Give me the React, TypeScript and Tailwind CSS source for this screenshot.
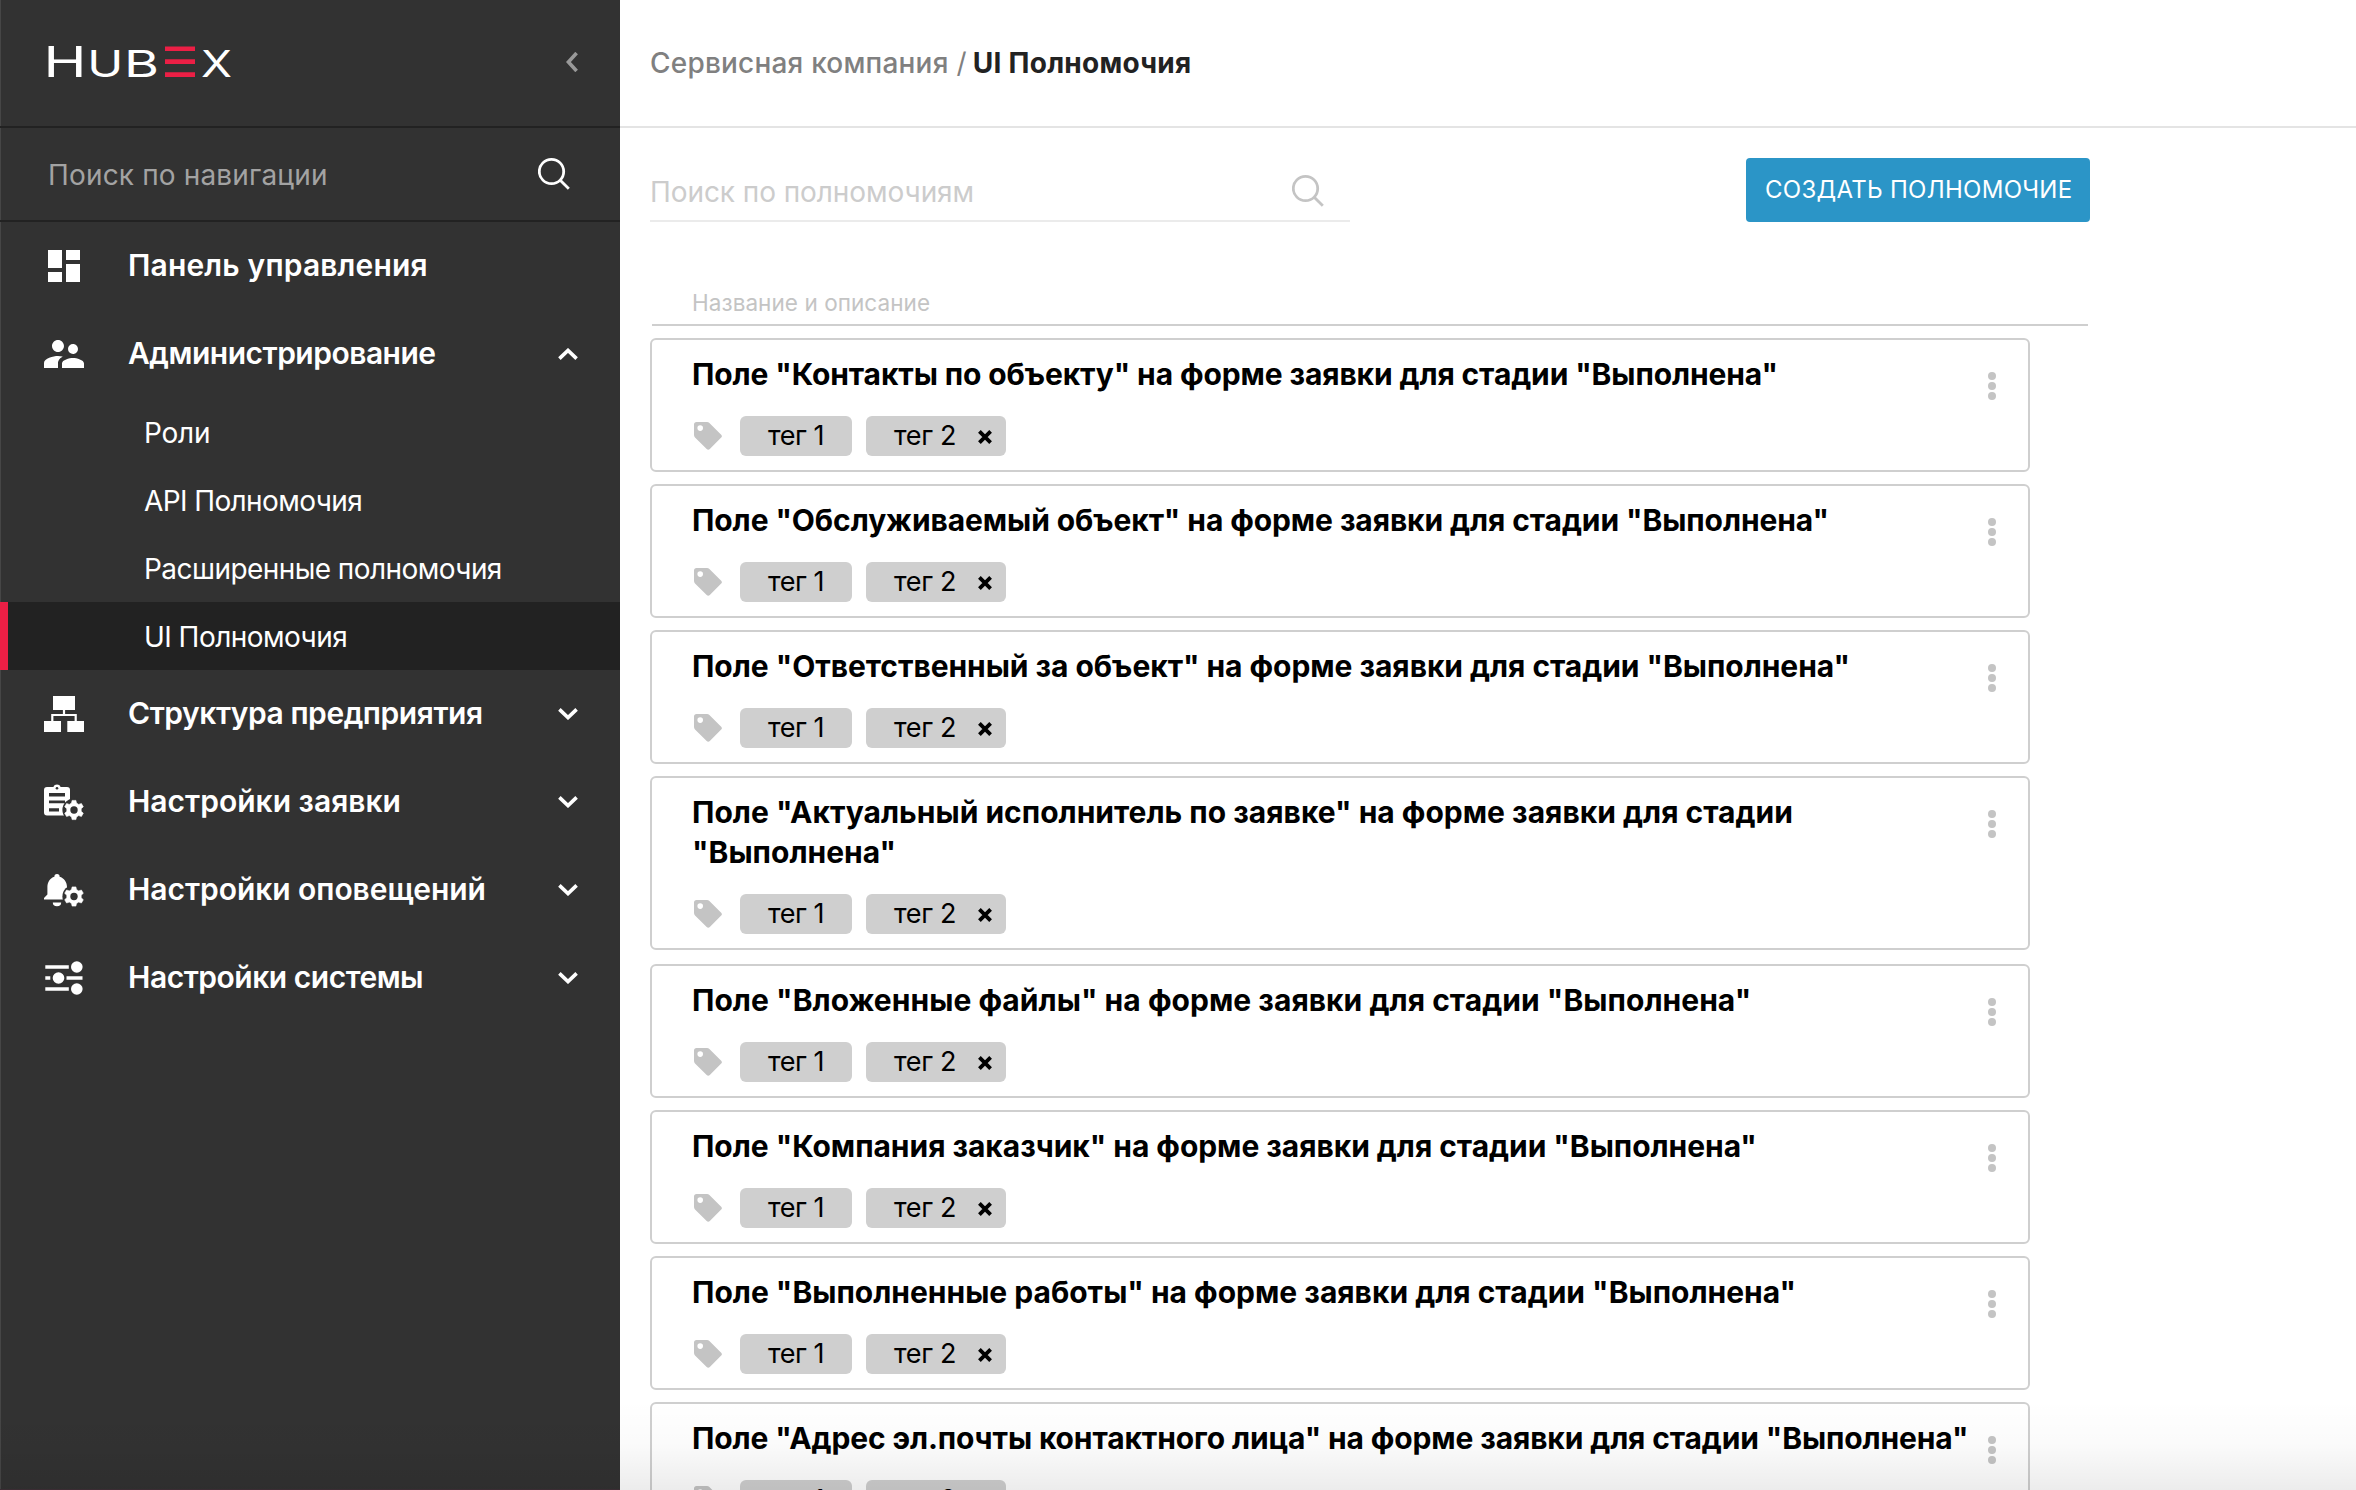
import type { ReactNode } from "react";
import { MdSupervisorAccount } from "react-icons/md";

type SubItem = { label: string; tracking: string; active?: boolean };
type NavItem = {
  label: string;
  tracking: string;
  icon: ReactNode;
  expandable: boolean;
  children?: SubItem[];
};

const GEAR =
  "M-1.9 -9.6h3.8l.6 2.7 2.2 1.3 2.7-.9 1.9 3.3-2.1 1.9v2.6l2.1 1.9-1.9 3.3-2.7-.9-2.2 1.3-.6 2.7h-3.8l-.6-2.7-2.2-1.3-2.7.9-1.9-3.3 2.1-1.9v-2.6l-2.1-1.9 1.9-3.3 2.7.9 2.2-1.3z";

function Gear({ x, y }: { x: number; y: number }) {
  return (
    <g transform={`translate(${x} ${y})`}>
      <circle r="11.6" fill="#323232" />
      <path d={GEAR} fill="#fff" stroke="#fff" strokeWidth="0.6" strokeLinejoin="round" />
      <circle r="3.7" fill="#323232" />
    </g>
  );
}

const DashboardIcon = () => (
  <svg width="40" height="40" viewBox="0 0 40 40" fill="#fff">
    <path d="M4 4h14v18H4zM4 26h14v10H4zM22 4h14v10H22zM22 18h14v18H22z" />
  </svg>
);

const StructureIcon = () => (
  <svg width="40" height="40" viewBox="0 0 40 40" fill="#fff">
    <path d="M9 2h22v14H9zM0 27h17v11H0zM23.3 27H40v11H23.3z" />
    <path d="M20 16v5M8.3 28v-7h23.4v7" fill="none" stroke="#fff" strokeWidth="2.2" />
  </svg>
);

const ClipboardGearIcon = () => (
  <svg width="40" height="40" viewBox="0 0 40 40" fill="#fff">
    <path d="M3 5h6.3a4 4 0 0 1 7.4 0H23a3 3 0 0 1 3 3v25.6H3a3 3 0 0 1-3-3V8a3 3 0 0 1 3-3z" />
    <circle cx="13" cy="6.2" r="1.3" fill="#323232" />
    <path d="M5 11h16v3.6H5zM5 18.4h16v2.8H5zM5 26.2h10v3.2H5z" fill="#323232" />
    <Gear x={30} y={28} />
  </svg>
);

const BellGearIcon = () => (
  <svg width="40" height="40" viewBox="0 0 40 40" fill="#fff">
    <path d="M13 4a2.6 2.6 0 0 1 2.6 2.7C20 8 23 12 23 17v8l3 3v1.6H0V28l3.4-3.4V17c0-5 2.7-9 7-10.3A2.6 2.6 0 0 1 13 4z" />
    <path d="M8.8 32.4h8.4a4.2 3.8 0 0 1-8.4 0z" />
    <Gear x={30} y={26.5} />
  </svg>
);

const SlidersIcon = () => (
  <svg width="40" height="40" viewBox="0 0 40 40" fill="#fff">
    <path d="M1.3 9h23.5M1.3 20h5M22.5 20h16M1.3 31h23.5" stroke="#fff" strokeWidth="3.6" />
    <circle cx="32.8" cy="9" r="5.8" />
    <circle cx="14.5" cy="20" r="5.8" />
    <circle cx="32.8" cy="31" r="5.8" />
  </svg>
);

const NAV: NavItem[] = [
  { label: "Панель управления", tracking: "tracking-[0.16px]", icon: <DashboardIcon />, expandable: false },
  {
    label: "Администрирование",
    tracking: "tracking-[-0.5px]",
    icon: <MdSupervisorAccount size={48} />,
    expandable: true,
    children: [
      { label: "Роли", tracking: "tracking-[-0.2px]" },
      { label: "API Полномочия", tracking: "tracking-[-0.6px]" },
      { label: "Расширенные полномочия", tracking: "tracking-[-0.56px]" },
      { label: "UI Полномочия", tracking: "tracking-[-0.54px]", active: true },
    ],
  },
  { label: "Структура предприятия", tracking: "tracking-[-0.45px]", icon: <StructureIcon />, expandable: true },
  { label: "Настройки заявки", tracking: "tracking-[0px]", icon: <ClipboardGearIcon />, expandable: true },
  { label: "Настройки оповещений", tracking: "tracking-[-0.05px]", icon: <BellGearIcon />, expandable: true },
  { label: "Настройки системы", tracking: "tracking-[-0.48px]", icon: <SlidersIcon />, expandable: true },
];

type Permission = { title: string; tracking: string; spacing?: string };

const PERMISSIONS: Permission[] = [
  { title: 'Поле "Контакты по объекту" на форме заявки для стадии "Выполнена"', tracking: "tracking-[-0.122px]" },
  { title: 'Поле "Обслуживаемый объект" на форме заявки для стадии "Выполнена"', tracking: "tracking-[-0.1px]" },
  { title: 'Поле "Ответственный за объект" на форме заявки для стадии "Выполнена"', tracking: "tracking-[-0.05px]" },
  {
    title: 'Поле "Актуальный исполнитель по заявке" на форме заявки для стадии "Выполнена"',
    tracking: "tracking-[0px]",
    spacing: "mb-[14px]",
  },
  { title: 'Поле "Вложенные файлы" на форме заявки для стадии "Выполнена"', tracking: "tracking-[0.03px]" },
  { title: 'Поле "Компания заказчик" на форме заявки для стадии "Выполнена"', tracking: "tracking-[-0.05px]" },
  { title: 'Поле "Выполненные работы" на форме заявки для стадии "Выполнена"', tracking: "tracking-[-0.01px]" },
  {
    title: 'Поле "Адрес эл.почты контактного лица" на форме заявки для стадии "Выполнена"',
    tracking: "tracking-[-0.135px]",
  },
];

function Logo() {
  return (
    <svg width="192" height="32" viewBox="0 0 192 32" className="overflow-visible" fill="#fff" fontWeight="400">
      <text x="0.5" y="31" fontSize="42.5" textLength="43" lengthAdjust="spacingAndGlyphs">H</text>
      <text x="44.2" y="31" fontSize="37" textLength="36" lengthAdjust="spacingAndGlyphs">U</text>
      <text x="81" y="31" fontSize="37" textLength="35" lengthAdjust="spacingAndGlyphs">B</text>
      <path d="M122 .5h30v4.6h-30zM122 13.3h30v4.8h-30zM122 26.3h30V31h-30z" fill="#ec1f45" />
      <text x="158" y="31" fontSize="37" textLength="31" lengthAdjust="spacingAndGlyphs">X</text>
    </svg>
  );
}

function SearchIcon() {
  return (
    <svg width="34" height="34" viewBox="0 0 34 34" fill="none" stroke="currentColor" strokeWidth="2.8">
      <circle cx="13.5" cy="14.5" r="12.2" />
      <path d="M22 23l8.8 8.8" />
    </svg>
  );
}

function Chevron({ up }: { up?: boolean }) {
  return (
    <svg width="20" height="12" viewBox="0 0 20 12" fill="none" stroke="#fff" strokeWidth="3.6">
      <path d={up ? "M1.4 10.6L10 2.4l8.6 8.2" : "M1.4 1.4L10 9.6l8.6-8.2"} />
    </svg>
  );
}

function Sidebar() {
  return (
    <aside className="flex h-full w-[620px] shrink-0 flex-col bg-[#323232] text-white shadow-[inset_1px_0_0_#464646]">
      <div className="flex h-32 items-center justify-between border-b-2 border-[#222222] pr-[42px] pb-0.5 pl-[43px]">
        <Logo />
        <svg width="12" height="20" viewBox="0 0 12 20" fill="none" stroke="#999" strokeWidth="3.6">
          <path d="M10.6 1L2.4 10l8.2 9" />
        </svg>
      </div>
      <div className="flex h-[94px] items-center justify-between border-b-2 border-[#222222] pr-12 pl-12">
        <span className="pt-px text-[28px] tracking-[0.16px] text-[#a3a3a3]">Поиск по навигации</span>
        <SearchIcon />
      </div>
      <nav className="flex flex-col">
        {NAV.map((item) => (
          <div key={item.label}>
            <div className="flex h-[88px] items-center pr-[42px]">
              <div className="ml-10 flex w-12 shrink-0 justify-center">{item.icon}</div>
              <span className={`ml-10 grow pb-px text-[30px] font-semibold whitespace-nowrap ${item.tracking}`}>
                {item.label}
              </span>
              {item.expandable && <Chevron up={!!item.children} />}
            </div>
            {item.children?.map((sub) => (
              <div
                key={sub.label}
                className={`flex h-[68px] items-center border-l-8 pt-px pl-34 text-[28px] whitespace-nowrap ${sub.tracking} ${
                  sub.active ? "border-[#ec1f45] bg-[#222222]" : "border-transparent"
                }`}
              >
                {sub.label}
              </div>
            ))}
          </div>
        ))}
      </nav>
    </aside>
  );
}

function Tag({ children, removable }: { children: string; removable?: boolean }) {
  return (
    <span
      className={`flex h-10 items-center rounded-md bg-[#cfcfcf] pl-7 text-[27px] whitespace-nowrap ${
        removable ? "w-[140px] tracking-[-0.3px]" : "w-28 tracking-[-0.43px]"
      }`}
    >
      {children}
      {removable && (
        <svg
          width="14"
          height="14"
          viewBox="0 0 14 14"
          className="mt-0.5 mr-3.5 ml-auto"
          stroke="#000"
          strokeWidth="3.8"
        >
          <path d="M1.4 1.4l11.2 11.2M12.6 1.4L1.4 12.6" />
        </svg>
      )}
    </span>
  );
}

function PermissionCard({ title, tracking, spacing }: Permission) {
  return (
    <article
      className={`flex w-[1380px] shrink-0 justify-between rounded-md border-2 border-[#cfcfcf] pt-3.5 pr-8 pb-3.5 pl-10 ${
        spacing ?? "mb-3"
      }`}
    >
      <div className="w-[1290px]">
        <h2 className={`text-[30px] leading-10 font-bold text-black ${tracking}`}>{title}</h2>
        <div className="mt-[22px] flex h-10 items-center text-black">
          <svg width="28" height="28" viewBox="0 0 28 28" className="ml-0.5">
            <path
              fillRule="evenodd"
              fill="#c4c4c4"
              d="M2.6 0H13a3.4 3.4 0 0 1 2.4 1l11.8 11.8a2 2 0 0 1 0 2.8L15.8 27.1a2.2 2.2 0 0 1-3.1 0L1 15.4A3.4 3.4 0 0 1 0 13V2.6A2.6 2.6 0 0 1 2.6 0zM6.2 3.3a2.8 2.8 0 1 0 0 5.6 2.8 2.8 0 0 0 0-5.6z"
            />
          </svg>
          <div className="ml-[18px] flex gap-3.5">
            <Tag>тег 1</Tag>
            <Tag removable>тег 2</Tag>
          </div>
        </div>
      </div>
      <div className="mt-[18px] flex flex-col gap-0.5">
        <i className="size-2 rounded-full bg-[#c4c4c4]" />
        <i className="size-2 rounded-full bg-[#c4c4c4]" />
        <i className="size-2 rounded-full bg-[#c4c4c4]" />
      </div>
    </article>
  );
}

export default function App() {
  return (
    <div className="relative flex h-[1490px] w-[2356px] overflow-hidden bg-white font-['Inter','Liberation_Sans',sans-serif]">
      <Sidebar />
      <main className="flex min-w-0 grow flex-col">
        <header className="flex h-32 shrink-0 items-center border-b-2 border-[#e4e4e4] pb-px pl-[30px] text-[28px] whitespace-pre">
          <span className="font-medium tracking-[0.2px] text-[#808080]">Сервисная компания</span>
          <span className="ml-2 text-[#808080]">/</span>
          <span className="ml-1.5 font-bold tracking-[0.28px] text-[#222222]">UI Полномочия</span>
        </header>
        <section className="flex grow flex-col pt-[30px] pl-[30px]">
          <div className="flex h-16 w-[1440px] shrink-0 justify-between">
            <div className="flex w-[700px] items-center justify-between border-b-2 border-[#ebebeb] pt-1 pr-6">
              <span className="pt-0.5 text-[28px] tracking-[-0.07px] text-[#cccccc]">Поиск по полномочиям</span>
              <span className="text-[#c4c4c4]">
                <SearchIcon />
              </span>
            </div>
            <button className="flex w-[344px] items-center rounded bg-[#2b95c7] pl-[19px] text-[24px] tracking-[0.28px] whitespace-nowrap text-white">
              СОЗДАТЬ ПОЛНОМОЧИЕ
            </button>
          </div>
          <div className="mt-[60px] mb-3 ml-0.5 flex h-11 w-[1436px] shrink-0 items-center border-b-2 border-[#cfcfcf] pb-px pl-10 text-[22.5px] tracking-[0.06px] text-[#c4c4c4]">
            Название и описание
          </div>
          {PERMISSIONS.map((p) => (
            <PermissionCard key={p.title} {...p} />
          ))}
        </section>
      </main>
      <div className="pointer-events-none absolute inset-x-0 bottom-0 h-[90px] bg-linear-to-b from-black/0 via-black/[0.018] to-black/[0.075]" />
      <div className="pointer-events-none absolute bottom-0 left-0 h-px w-[620px] bg-[#3b2c33]" />
    </div>
  );
}
